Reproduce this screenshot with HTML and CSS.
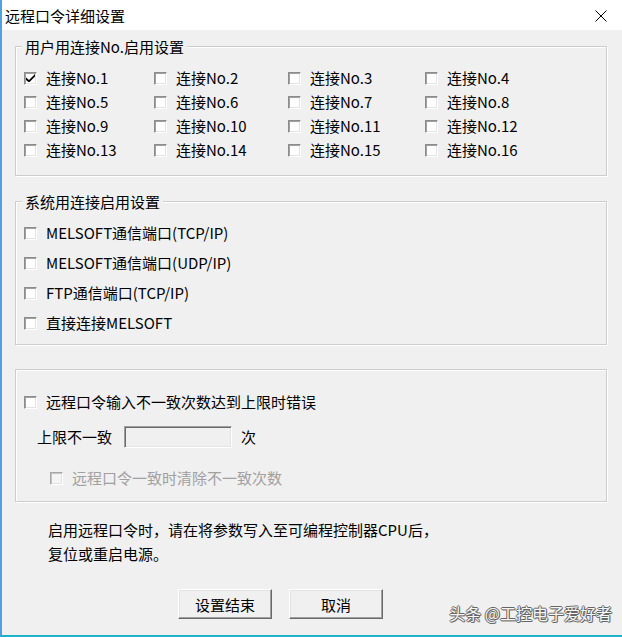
FILE: index.html
```html
<!DOCTYPE html>
<html lang="zh-CN">
<head>
  <meta charset="UTF-8" />
  <title>远程口令详细设置</title>
  <link rel="stylesheet" href="styles.css">
</head>
<body>
  <div class="window">
    <div class="titlebar">
      <span class="title">远程口令详细设置</span>
      <svg class="close" width="12" height="12" viewBox="0 0 12 12">
        <path d="M0.5 0.5 L11.5 11.5 M11.5 0.5 L0.5 11.5" stroke="#000" stroke-width="1" fill="none" />
      </svg>
    </div>
    <div class="content">
      <fieldset class="group group-user">
        <legend>用户用连接No.启用设置</legend>
        <div class="conn-grid">
          <label class="check"><span class="box"><svg width="9" height="8" viewBox="0 0 9 8"><polygon points="0,3.5 3,6 9,0 9,2.5 3,8.5 0,6" fill="#000" /></svg></span>连接No.1</label>
          <label class="check"><span class="box"></span>连接No.2</label>
          <label class="check"><span class="box"></span>连接No.3</label>
          <label class="check"><span class="box"></span>连接No.4</label>
          <label class="check"><span class="box"></span>连接No.5</label>
          <label class="check"><span class="box"></span>连接No.6</label>
          <label class="check"><span class="box"></span>连接No.7</label>
          <label class="check"><span class="box"></span>连接No.8</label>
          <label class="check"><span class="box"></span>连接No.9</label>
          <label class="check"><span class="box"></span>连接No.10</label>
          <label class="check"><span class="box"></span>连接No.11</label>
          <label class="check"><span class="box"></span>连接No.12</label>
          <label class="check"><span class="box"></span>连接No.13</label>
          <label class="check"><span class="box"></span>连接No.14</label>
          <label class="check"><span class="box"></span>连接No.15</label>
          <label class="check"><span class="box"></span>连接No.16</label>
        </div>
      </fieldset>

      <fieldset class="group group-system">
        <legend>系统用连接启用设置</legend>
        <div class="sys-list">
          <label class="check"><span class="box"></span>MELSOFT通信端口(TCP/IP)</label>
          <label class="check"><span class="box"></span>MELSOFT通信端口(UDP/IP)</label>
          <label class="check"><span class="box"></span>FTP通信端口(TCP/IP)</label>
          <label class="check"><span class="box"></span>直接连接MELSOFT</label>
        </div>
      </fieldset>

      <fieldset class="group group-limit">
        <label class="check"><span class="box"></span>远程口令输入不一致次数达到上限时错误</label>
        <div class="limit-row">
          <span>上限不一致</span>
          <input class="field" type="text" disabled />
          <span class="unit">次</span>
        </div>
        <label class="check disabled"><span class="box"></span>远程口令一致时清除不一致次数</label>
      </fieldset>

      <p class="note">启用远程口令时，请在将参数写入至可编程控制器CPU后，<br>复位或重启电源。</p>

      <div class="actions">
        <button class="btn">设置结束</button>
        <button class="btn">取消</button>
      </div>
    </div>
    <div class="watermark">头条 @工控电子爱好者</div>
  </div>
</body>
</html>
```

FILE: styles.css
```css
body {
  margin: 0;
  font-family: "Noto Sans CJK SC", "Liberation Sans", sans-serif;
  font-size: 15px;
  color: #000;
}
.window {
  position: relative;
  width: 622px;
  height: 637px;
  box-sizing: border-box;
  background: #f0f0f0;
  border-left: 2px solid #4ea3dc;
  border-bottom: 2px solid #1cb4c6;
  overflow: hidden;
}
.titlebar {
  height: 30px;
  box-sizing: border-box;
  padding: 2px 15px 0 3px;
  background: #fff;
  display: flex;
  align-items: center;
  justify-content: space-between;
}
.title {
  line-height: 20px;
}
.content {
  padding: 7px 15px 0 13px;
}
/* group boxes */
.group {
  margin: 0;
  padding: 0;
  min-width: 0;
  border: 1px solid #cdcdcd;
  box-shadow: inset 1px 1px #fff, 1px 1px #fff;
}
.group legend {
  margin-left: 6px;
  padding: 0 3px;
  line-height: 19px;
  background: #f0f0f0;
}
.group-system {
  margin-top: 16px;
}
.group-limit {
  margin-top: 24px;
  padding: 20px 0 11px 8px;
}
.conn-grid {
  display: grid;
  grid-template-columns: 130px 134px 137px auto;
  grid-auto-rows: 24px;
  padding: 10px 0 13px 8px;
}
.sys-list {
  display: grid;
  grid-auto-rows: 30px;
  padding: 7px 0 6px 8px;
}
/* checkboxes */
.check {
  display: flex;
  align-items: center;
  gap: 9px;
  height: 24px;
  line-height: 20px;
  white-space: nowrap;
}
.sys-list .check {
  height: 30px;
}
.box {
  flex: none;
  width: 13px;
  height: 13px;
  box-sizing: border-box;
  background: #fff;
  border: 1px solid;
  border-color: #8c8c8c #fff #fff #8c8c8c;
  box-shadow: inset 1px 1px #a0a0a0, inset -1px -1px #e3e3e3;
  display: flex;
  align-items: center;
  justify-content: center;
}
.check.disabled {
  color: #a0a0a0;
  margin: 18px 0 0 26px;
}
.check.disabled .box {
  background: #f4f4f4;
  border-color: #a8a8a8 #fff #fff #a8a8a8;
  box-shadow: inset 1px 1px #c4c4c4, inset -1px -1px #e3e3e3;
}
.limit-row {
  display: flex;
  align-items: center;
  height: 23px;
  margin: 11px 0 0 13px;
  line-height: 20px;
}
.field {
  width: 108px;
  height: 22px;
  box-sizing: border-box;
  margin: 0 9px 0 12px;
  padding: 0;
  background: #f0f0f0;
  border: 1px solid;
  border-color: #a0a0a0 #fff #fff #a0a0a0;
  box-shadow: inset 1px 1px #696969, inset -1px -1px #e3e3e3;
}
.note {
  margin: 16px 0 0 33px;
  line-height: 24px;
}
.actions {
  display: flex;
  gap: 17px;
  margin-top: 23px;
  padding-left: 163px;
}
.btn {
  width: 94px;
  height: 30px;
  padding: 0;
  font: inherit;
  color: #000;
  background: #f0f0f0;
  border: 1px solid;
  border-color: #fff #696969 #696969 #fff;
  box-shadow: inset -1px -1px #a0a0a0, inset 1px 1px #e3e3e3;
}
.watermark {
  position: absolute;
  right: 10px;
  bottom: 12px;
  font-size: 16px;
  line-height: 20px;
  color: #f6f6f6;
  text-shadow: 1px 0 #666, -1px 0 #666, 0 1px #666, 0 -1px #666, 1px 1px #888;
}
```
